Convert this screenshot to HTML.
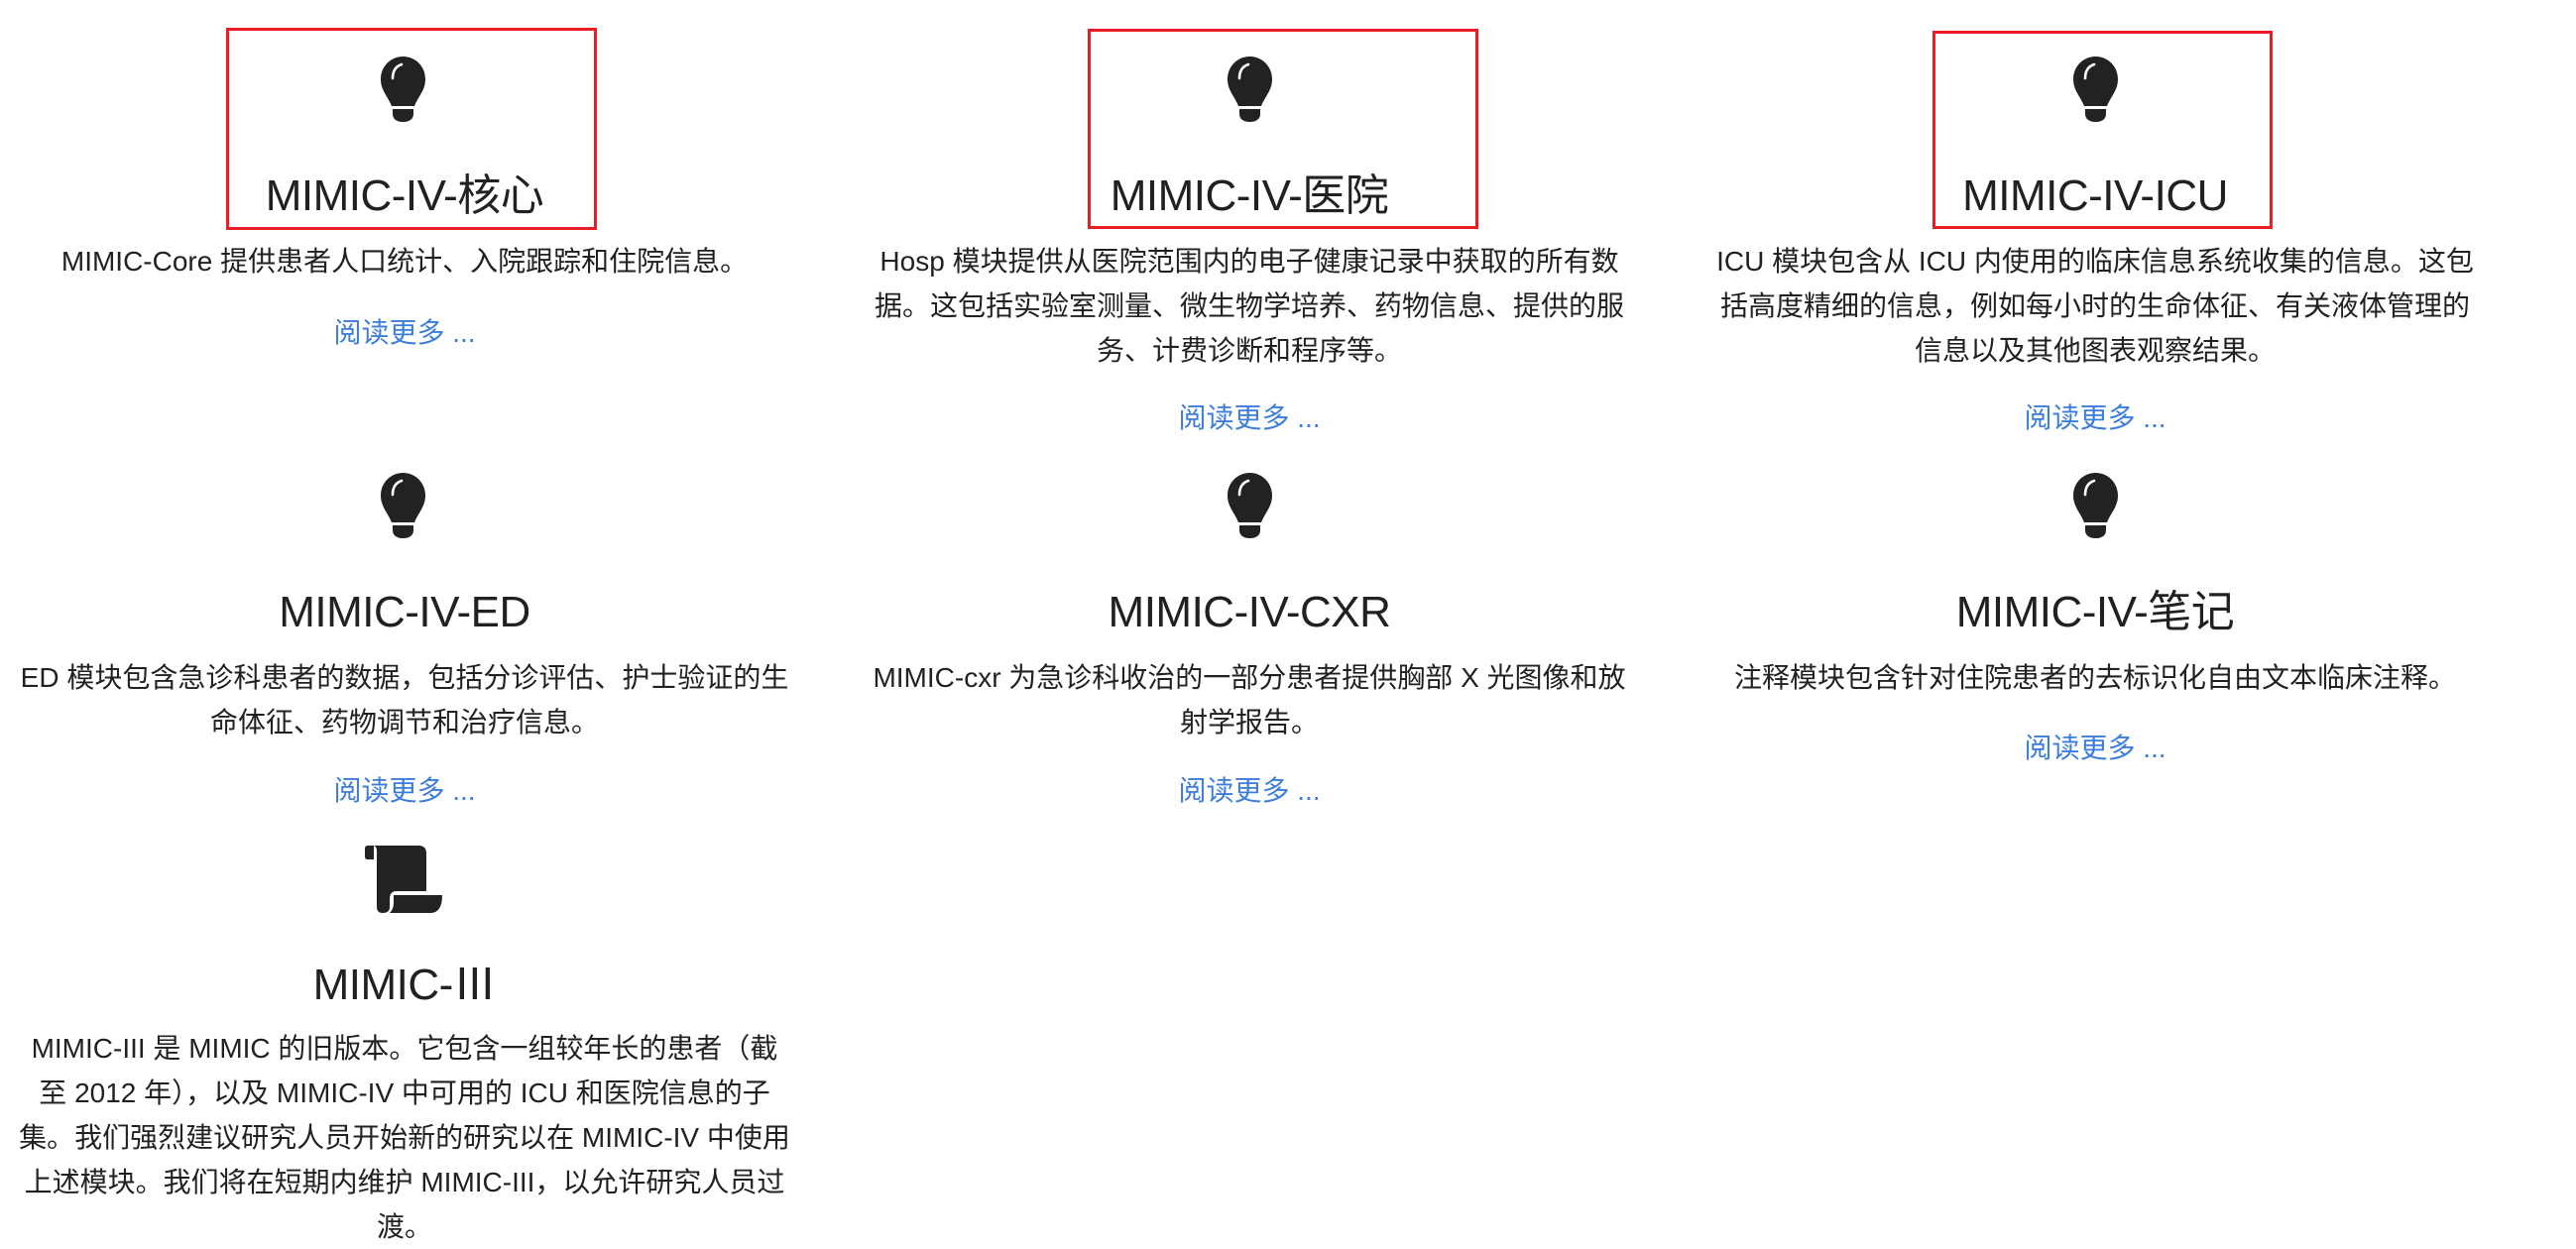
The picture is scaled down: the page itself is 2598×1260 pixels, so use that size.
<!DOCTYPE html>
<html><head><meta charset="utf-8"><style>
html,body{margin:0;padding:0;background:#fff;width:2598px;height:1260px;overflow:hidden;position:relative}
body{font-family:"Liberation Sans","Noto Sans CJK SC",sans-serif;color:#212121}
.b{position:absolute;width:880px;text-align:center}
.t{font-size:44px;line-height:60px;letter-spacing:-0.5px}
.d{font-size:28px;line-height:45px}
.a{font-size:28px;line-height:45px;color:#3b7ddd}
svg{position:absolute}
.box{position:absolute;border:3px solid #ed1c24;box-sizing:border-box}
</style></head><body>

<div class="box" style="left:228px;top:28px;width:374px;height:204px"></div>
<div class="box" style="left:1097px;top:29px;width:394px;height:202px"></div>
<div class="box" style="left:1949px;top:31px;width:343px;height:200px"></div>

<svg width="0" height="0" style="position:absolute"><defs><g id="bulb"><path fill="#222" d="M22.5 0C35 0 45 10 45 23C45 34 38 40 34 50H11C7 40 0 34 0 23C0 10 10 0 22.5 0Z"/><path fill="#222" d="M12 53H33V58C33 63 29 66 22.5 66C16 66 12 63 12 58Z"/><path fill="none" stroke="#fff" stroke-width="2.6" stroke-linecap="round" d="M12 22C12 15 15 10 21 8"/></g></defs></svg>

<svg style="left:384px;top:57px" width="45" height="66" viewBox="0 0 45 66"><use href="#bulb"/></svg>
<svg style="left:1238px;top:57px" width="45" height="66" viewBox="0 0 45 66"><use href="#bulb"/></svg>
<svg style="left:2091px;top:57px" width="45" height="66" viewBox="0 0 45 66"><use href="#bulb"/></svg>
<svg style="left:384px;top:477px" width="45" height="66" viewBox="0 0 45 66"><use href="#bulb"/></svg>
<svg style="left:1238px;top:477px" width="45" height="66" viewBox="0 0 45 66"><use href="#bulb"/></svg>
<svg style="left:2091px;top:477px" width="45" height="66" viewBox="0 0 45 66"><use href="#bulb"/></svg>

<!-- scroll -->
<svg style="left:366px;top:853px" width="80" height="68" viewBox="0 0 80 68">
<path fill="#222" d="M2 3Q2 0 5 0H11V14H5Q2 14 2 11Z"/>
<path fill="#222" d="M10 0H56Q64 0 64 8V46H34Q27 46 27 54V62Q27 68 20 68Q14 68 14 62V6Q14 0 10 0Z"/>
<path fill="#222" d="M31 50H80Q80 68 68 68H27Q31 64 31 58Z"/>
</svg>

<!-- row 1 -->
<div class="b t" style="left:-32px;top:168px">MIMIC-IV-核心</div>
<div class="b d" style="left:-32px;top:241px">MIMIC-Core 提供患者人口统计、入院跟踪和住院信息。</div>
<div class="b a" style="left:-32px;top:313px">阅读更多 ...</div>

<div class="b t" style="left:820px;top:168px">MIMIC-IV-医院</div>
<div class="b d" style="left:820px;top:241px">Hosp 模块提供从医院范围内的电子健康记录中获取的所有数<br>据。这包括实验室测量、微生物学培养、药物信息、提供的服<br>务、计费诊断和程序等。</div>
<div class="b a" style="left:820px;top:399px">阅读更多 ...</div>

<div class="b t" style="left:1673px;top:168px">MIMIC-IV-ICU</div>
<div class="b d" style="left:1673px;top:241px">ICU 模块包含从 ICU 内使用的临床信息系统收集的信息。这包<br>括高度精细的信息，例如每小时的生命体征、有关液体管理的<br>信息以及其他图表观察结果。</div>
<div class="b a" style="left:1673px;top:399px">阅读更多 ...</div>

<!-- row 2 -->
<div class="b t" style="left:-32px;top:588px">MIMIC-IV-ED</div>
<div class="b d" style="left:-32px;top:661px">ED 模块包含急诊科患者的数据，包括分诊评估、护士验证的生<br>命体征、药物调节和治疗信息。</div>
<div class="b a" style="left:-32px;top:775px">阅读更多 ...</div>

<div class="b t" style="left:820px;top:588px">MIMIC-IV-CXR</div>
<div class="b d" style="left:820px;top:661px">MIMIC-cxr 为急诊科收治的一部分患者提供胸部 X 光图像和放<br>射学报告。</div>
<div class="b a" style="left:820px;top:775px">阅读更多 ...</div>

<div class="b t" style="left:1673px;top:588px">MIMIC-IV-笔记</div>
<div class="b d" style="left:1673px;top:661px">注释模块包含针对住院患者的去标识化自由文本临床注释。</div>
<div class="b a" style="left:1673px;top:732px">阅读更多 ...</div>

<!-- row 3 -->
<div class="b t" style="left:-32px;top:964px">MIMIC-Ⅲ</div>
<div class="b d" style="left:-32px;top:1035px">MIMIC-III 是 MIMIC 的旧版本。它包含一组较年长的患者（截<br>至 2012 年），以及 MIMIC-IV 中可用的 ICU 和医院信息的子<br>集。我们强烈建议研究人员开始新的研究以在 MIMIC-IV 中使用<br>上述模块。我们将在短期内维护 MIMIC-III，以允许研究人员过<br>渡。</div>

</body></html>
